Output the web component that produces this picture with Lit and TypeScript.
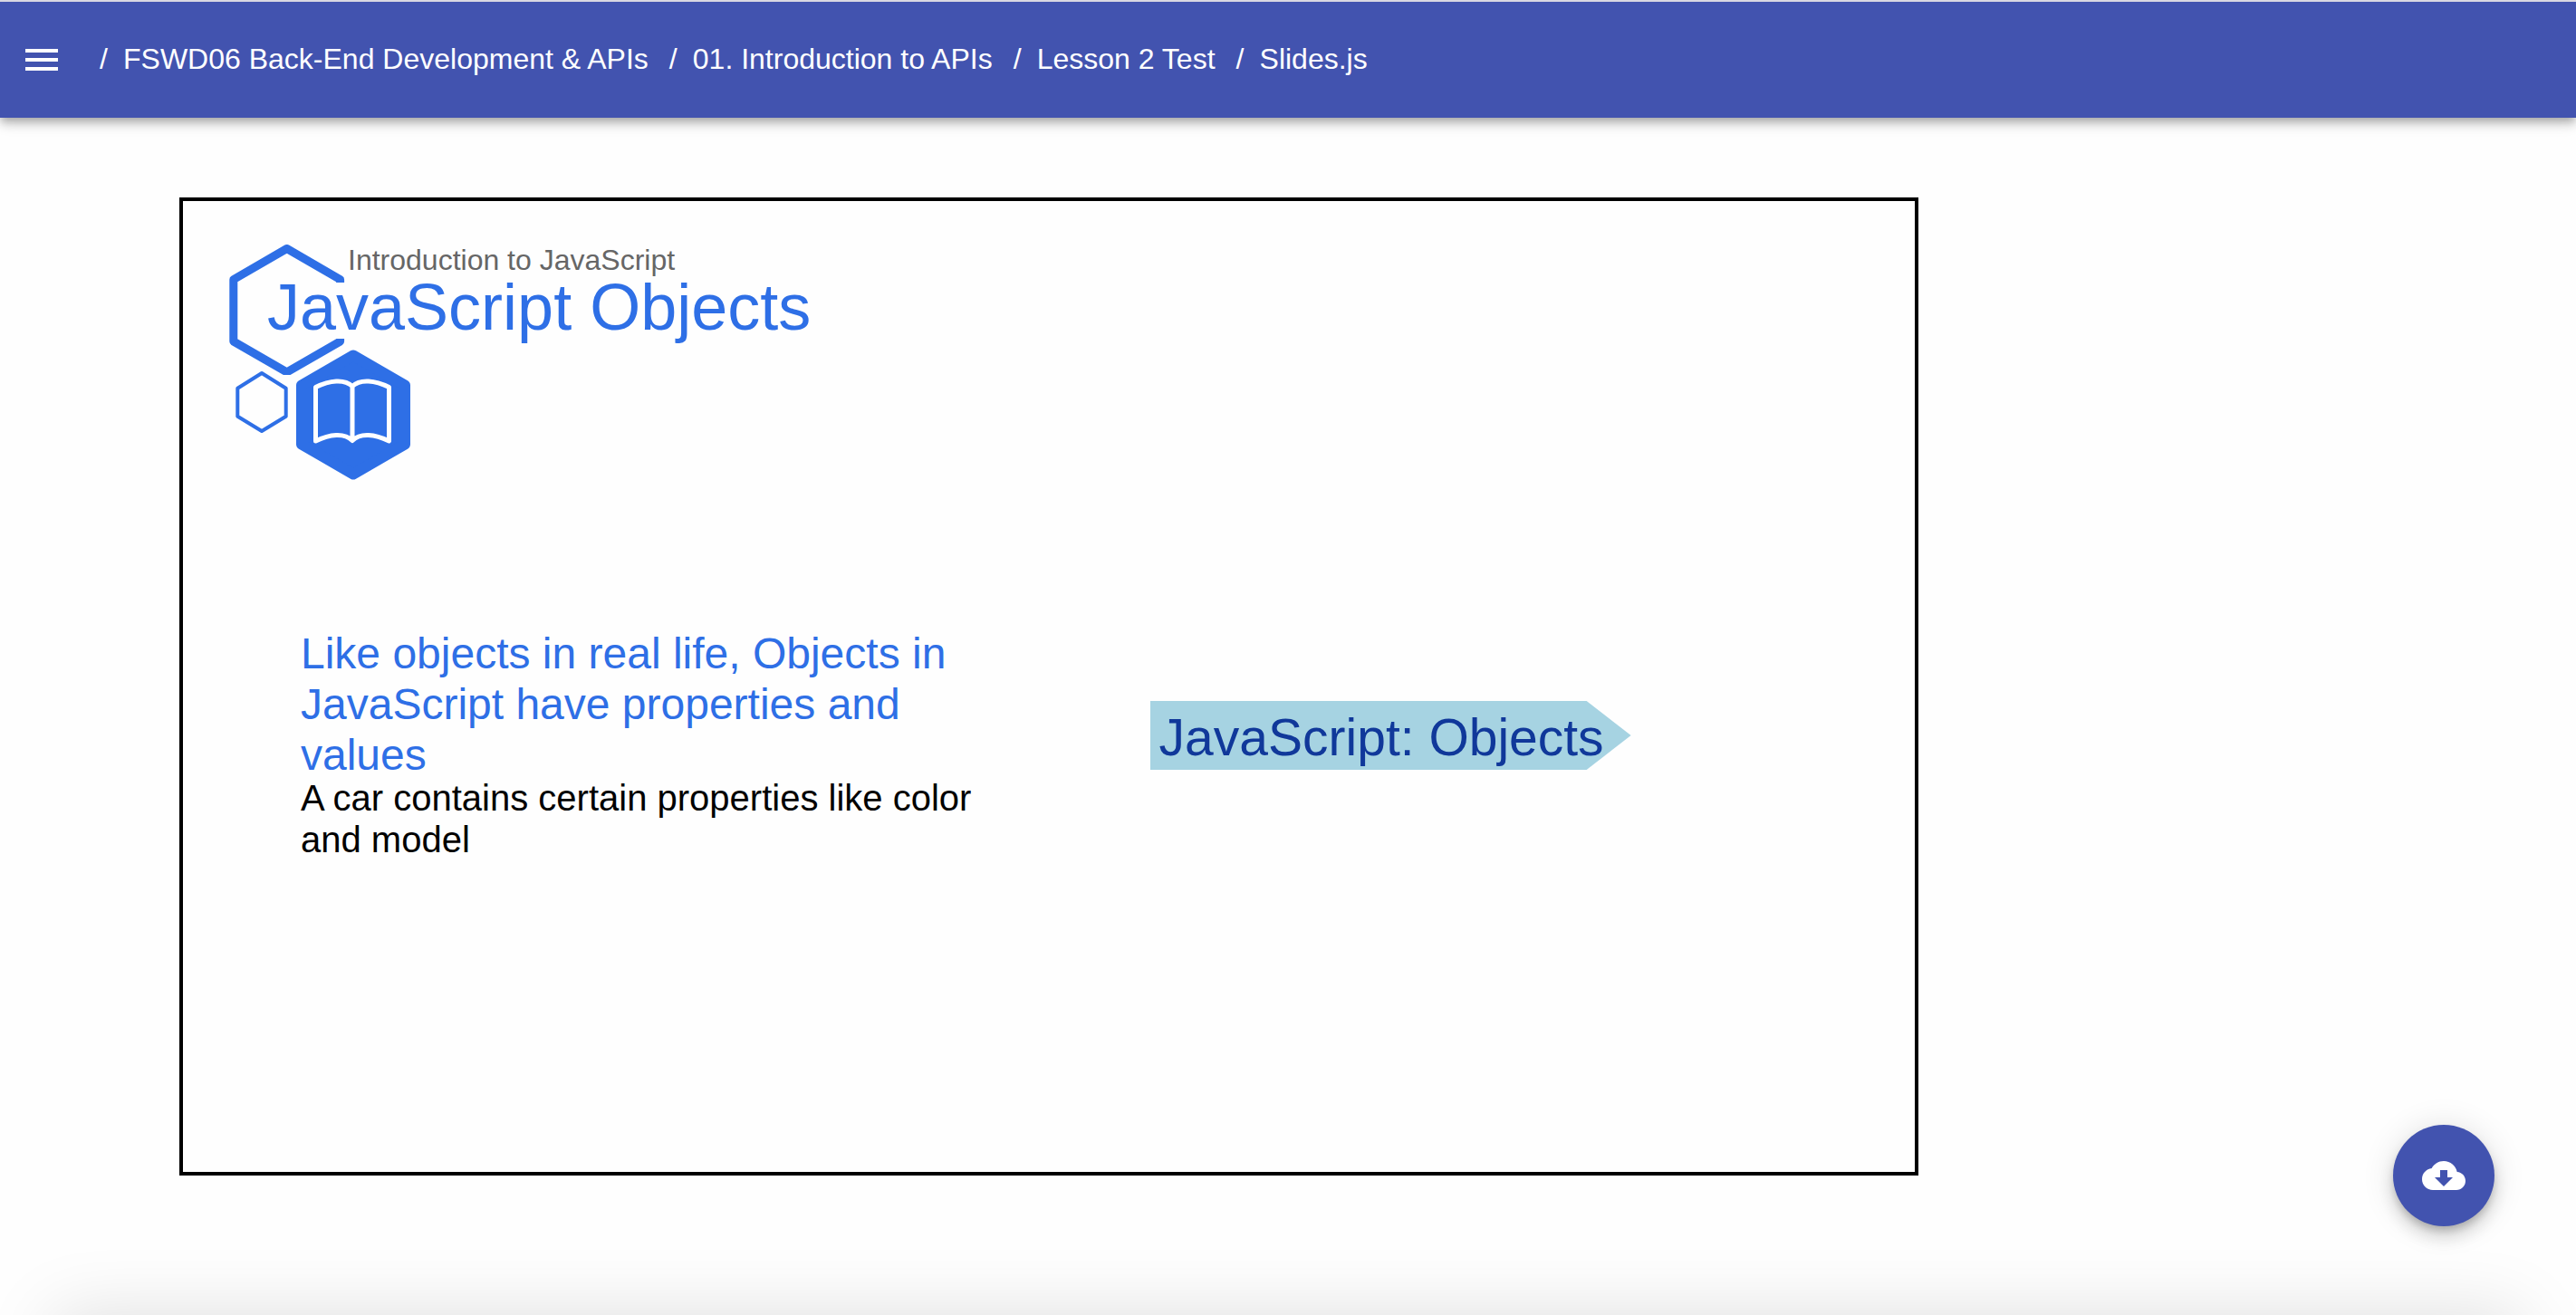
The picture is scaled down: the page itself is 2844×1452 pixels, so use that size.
import { LitElement, html, css, svg } from "lit";
import { customElement, property } from "lit/decorators.js";

@customElement("app-header")
class AppHeader extends LitElement {
  @property({ attribute: false }) crumbs: string[] = [];

  static styles = css`
    :host {
      display: block;
    }
    .bar {
      display: flex;
      align-items: center;
      gap: 40px;
      min-height: 128px;
      padding: 0 22px;
      border-top: 2px solid #d9d7e2;
      background: #4253af;
      color: #fff;
      box-shadow: 0 4px 8px -2px rgba(0, 0, 0, 0.2),
        0 8px 10px 0 rgba(0, 0, 0, 0.14), 0 2px 20px 0 rgba(0, 0, 0, 0.12);
    }
    .menu {
      display: flex;
      padding: 0;
      border: 0;
      background: none;
      color: inherit;
      cursor: pointer;
    }
    .icon {
      width: 48px;
      height: 48px;
      fill: currentColor;
    }
    .crumbs {
      display: flex;
      flex-wrap: wrap;
      margin: 0;
      padding: 0 0 2px;
      list-style: none;
      font-size: 32px;
      line-height: 48px;
    }
    .crumb {
      display: flex;
    }
    .crumb::before {
      content: "/";
      width: 26px;
    }
    .crumb + .crumb::before {
      padding-left: 23px;
    }
    .link {
      color: inherit;
      text-decoration: none;
    }
  `;

  render() {
    return html`
      <header class="bar">
        <button class="menu" aria-label="Open menu">
          <svg class="icon" viewBox="0 0 24 24" aria-hidden="true">
            <path d="M3 18h18v-2H3v2zm0-5h18v-2H3v2zm0-7v2h18V6H3z" />
          </svg>
        </button>
        <nav aria-label="Breadcrumb">
          <ol class="crumbs">
            ${this.crumbs.map(
              (c) => html`<li class="crumb"><a class="link" href="#">${c}</a></li>`
            )}
          </ol>
        </nav>
      </header>
    `;
  }
}

const emblem = svg`
  <clipPath id="gap">
    <path d="M0 0H204V42H100V104H204V144H0Z" />
  </clipPath>
  <g fill="none" stroke="#2e6fe6" stroke-linejoin="round">
    <path stroke-width="9" clip-path="url(#gap)"
      d="M123.600 46V38.700L64.700 4.500L5.800 38.700V107L64.700 141L123.600 107V100" />
    <path stroke-width="4"
      d="M37 142L63.700 158.800V189.700L37 206L10.300 189.700V158.800Z" />
    <path stroke-width="12" fill="#2e6fe6"
      d="M138 122.500L195 155.500V220.500L138 253.500L81 220.500V155.500Z" />
  </g>
  <path fill="none" stroke="#fff" stroke-width="5" stroke-linejoin="round"
    d="M137 156V216M137 156.500C128 148 112 150 96.500 157.500V217C112 209.500 128 207.500 137 216.500C146 207.500 162 209.500 177.500 217V157.500C162 150 146 148 137 156.500" />
`;

@customElement("lesson-slide")
class LessonSlide extends LitElement {
  static styles = css`
    :host {
      display: block;
    }
    .slide {
      box-sizing: border-box;
      aspect-ratio: 16 / 9;
      border: 4px solid #000;
      padding: 48px 50px;
      display: flex;
      flex-direction: column;
      gap: 160px;
    }
    .head {
      display: grid;
    }
    .emblem,
    .titles {
      grid-area: 1 / 1;
    }
    .emblem {
      width: 204px;
      height: 264px;
    }
    .titles {
      padding-left: 43px;
    }
    .kicker {
      margin: 0;
      padding-left: 89px;
      color: #666;
      font-size: 32px;
      line-height: 34px;
    }
    .title {
      margin: 0;
      color: #2e6fe6;
      font-weight: 400;
      font-size: 72px;
      line-height: 70px;
    }
    .body {
      display: grid;
      grid-template-columns: 43fr 50fr;
      gap: 48px;
      padding-left: 80px;
    }
    .lead {
      margin: 0 0 -4px;
      color: #2e6fe6;
      font-weight: 400;
      font-size: 48px;
      line-height: 56px;
    }
    .text {
      margin: 0;
      color: #000;
      font-size: 40px;
      line-height: 46px;
    }
    .diagram {
      padding: 80px 0 0 111px;
    }
    .tag {
      width: fit-content;
      padding: 4px 30px 0 10px;
      background: #a6d3e2;
      color: #10389a;
      font-size: 57px;
      line-height: 72px;
      white-space: nowrap;
      clip-path: polygon(0 0, calc(100% - 49px) 0, 100% 50%, calc(100% - 49px) 100%, 0 100%);
    }
  `;

  render() {
    return html`
      <article class="slide">
        <header class="head">
          <svg class="emblem" viewBox="0 0 204 264" aria-hidden="true">
            ${emblem}
          </svg>
          <div class="titles">
            <p class="kicker">Introduction to JavaScript</p>
            <h1 class="title">JavaScript Objects</h1>
          </div>
        </header>
        <div class="body">
          <section>
            <h2 class="lead">Like objects in real life, Objects in JavaScript have properties and values</h2>
            <p class="text">A car contains certain properties like color and model</p>
          </section>
          <div class="diagram"><div class="tag">JavaScript: Objects</div></div>
        </div>
      </article>
    `;
  }
}

@customElement("app-root")
class AppRoot extends LitElement {
  static styles = css`
    :host {
      display: block;
      position: relative;
      min-height: 100vh;
      overflow: hidden;
      background: #fefefe;
      font-family: "Liberation Sans", Arial, sans-serif;
    }
    .main {
      padding: 88px 198px;
    }
    .slide {
      max-width: 1920px;
    }
    .download {
      position: fixed;
      right: 90px;
      bottom: 98px;
      display: grid;
      place-items: center;
      width: 112px;
      height: 112px;
      padding: 0;
      border: 0;
      border-radius: 50%;
      background: #4253af;
      color: #fff;
      cursor: pointer;
      box-shadow: 0 6px 10px -2px rgba(0, 0, 0, 0.2),
        0 12px 20px 0 rgba(0, 0, 0, 0.14), 0 2px 36px 0 rgba(0, 0, 0, 0.12);
    }
    .icon {
      width: 48px;
      height: 48px;
      fill: currentColor;
    }
    .sheet {
      position: fixed;
      left: 60px;
      right: 60px;
      top: 100%;
      height: 200px;
      box-shadow: 0 0 80px 0 rgba(0, 0, 0, 0.13);
    }
  `;

  private crumbs = [
    "FSWD06 Back-End Development & APIs",
    "01. Introduction to APIs",
    "Lesson 2 Test",
    "Slides.js",
  ];

  render() {
    return html`
      <app-header .crumbs=${this.crumbs}></app-header>
      <main class="main"><lesson-slide class="slide"></lesson-slide></main>
      <div class="sheet"></div>
      <button class="download" aria-label="Download">
        <svg class="icon" viewBox="0 0 24 24" aria-hidden="true">
          <path
            d="M19.350 10.040C18.670 6.590 15.640 4 12 4 9.110 4 6.600 5.640 5.350 8.040 2.340 8.360 0 10.910 0 14c0 3.310 2.690 6 6 6h13c2.760 0 5-2.240 5-5 0-2.640-2.050-4.780-4.650-4.960zM17 13l-5 5-5-5h3V9h4v4h3z"
          />
        </svg>
      </button>
    `;
  }
}
